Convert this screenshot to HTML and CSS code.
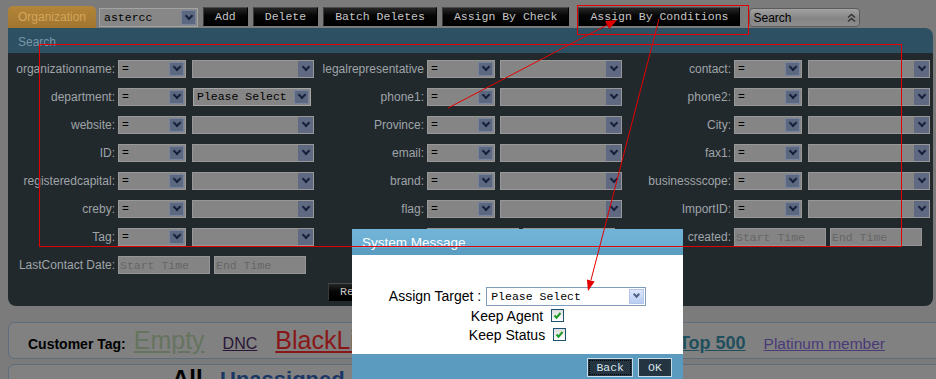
FILE: index.html
```html
<!DOCTYPE html>
<html lang="en">
<head>
<meta charset="UTF-8">
<title>Customers - Assign By Conditions</title>
<link rel="stylesheet" href="styles.css">
</head>
<body>

<div class="topbar">
    <span class="tab">Organization</span>
    <span class="sel top-sel"><span class="val">astercc</span><span class="arr"></span></span>
    <button class="btn">Add</button>
    <button class="btn">Delete</button>
    <button class="btn">Batch Deletes</button>
    <button class="btn">Assign By Check</button>
    <button class="btn sep">Assign By Conditions</button>
    <span class="search-sel sep">Search
        <svg width="9" height="9" viewBox="0 0 9 9"><path d="M1 4.5l3.5-3 3.5 3M1 8.5l3.5-3 3.5 3" fill="none" stroke="#333" stroke-width="1.4"/></svg>
    </span>
</div>

<div class="panel">
    <div class="panel-head">Search</div>
    <div class="panel-body">
        <div class="grid">
            <label class="lb">organizationname:</label>
            <span class="sel"><span class="val">=</span><span class="arr"></span></span>
            <span class="sel wide"><span class="val"></span><span class="arr"></span></span>
            <label class="lb">legalrepresentative</label>
            <span class="sel"><span class="val">=</span><span class="arr"></span></span>
            <span class="sel wide"><span class="val"></span><span class="arr"></span></span>
            <label class="lb">contact:</label>
            <span class="sel"><span class="val">=</span><span class="arr"></span></span>
            <span class="sel wide"><span class="val"></span><span class="arr"></span></span>

            <label class="lb">department:</label>
            <span class="sel"><span class="val">=</span><span class="arr"></span></span>
            <span class="sel pick"><span class="val">Please Select</span><span class="arr"></span></span>
            <label class="lb">phone1:</label>
            <span class="sel"><span class="val">=</span><span class="arr"></span></span>
            <span class="sel wide"><span class="val"></span><span class="arr"></span></span>
            <label class="lb">phone2:</label>
            <span class="sel"><span class="val">=</span><span class="arr"></span></span>
            <span class="sel wide"><span class="val"></span><span class="arr"></span></span>

            <label class="lb">website:</label>
            <span class="sel"><span class="val">=</span><span class="arr"></span></span>
            <span class="sel wide"><span class="val"></span><span class="arr"></span></span>
            <label class="lb">Province:</label>
            <span class="sel"><span class="val">=</span><span class="arr"></span></span>
            <span class="sel wide"><span class="val"></span><span class="arr"></span></span>
            <label class="lb">City:</label>
            <span class="sel"><span class="val">=</span><span class="arr"></span></span>
            <span class="sel wide"><span class="val"></span><span class="arr"></span></span>

            <label class="lb">ID:</label>
            <span class="sel"><span class="val">=</span><span class="arr"></span></span>
            <span class="sel wide"><span class="val"></span><span class="arr"></span></span>
            <label class="lb">email:</label>
            <span class="sel"><span class="val">=</span><span class="arr"></span></span>
            <span class="sel wide"><span class="val"></span><span class="arr"></span></span>
            <label class="lb">fax1:</label>
            <span class="sel"><span class="val">=</span><span class="arr"></span></span>
            <span class="sel wide"><span class="val"></span><span class="arr"></span></span>

            <label class="lb">registeredcapital:</label>
            <span class="sel"><span class="val">=</span><span class="arr"></span></span>
            <span class="sel wide"><span class="val"></span><span class="arr"></span></span>
            <label class="lb">brand:</label>
            <span class="sel"><span class="val">=</span><span class="arr"></span></span>
            <span class="sel wide"><span class="val"></span><span class="arr"></span></span>
            <label class="lb">businessscope:</label>
            <span class="sel"><span class="val">=</span><span class="arr"></span></span>
            <span class="sel wide"><span class="val"></span><span class="arr"></span></span>

            <label class="lb">creby:</label>
            <span class="sel"><span class="val">=</span><span class="arr"></span></span>
            <span class="sel wide"><span class="val"></span><span class="arr"></span></span>
            <label class="lb">flag:</label>
            <span class="sel"><span class="val">=</span><span class="arr"></span></span>
            <span class="sel wide"><span class="val"></span><span class="arr"></span></span>
            <label class="lb">ImportID:</label>
            <span class="sel"><span class="val">=</span><span class="arr"></span></span>
            <span class="sel wide"><span class="val"></span><span class="arr"></span></span>

            <label class="lb">Tag:</label>
            <span class="sel"><span class="val">=</span><span class="arr"></span></span>
            <span class="sel wide"><span class="val"></span><span class="arr"></span></span>
            <label class="lb">modified:</label>
            <span class="dates"><input class="date" placeholder="Start Time"><input class="date" placeholder="End Time"></span>
            <label class="lb">created:</label>
            <span class="dates"><input class="date" placeholder="Start Time"><input class="date" placeholder="End Time"></span>

            <label class="lb">LastContact Date:</label>
            <span class="dates"><input class="date" placeholder="Start Time"><input class="date" placeholder="End Time"></span>
        </div>
        <div class="actions">
            <button class="btn">Reset</button>
            <button class="btn">Search</button>
        </div>
    </div>
</div>

<div class="tagbar">
    <b>Customer Tag:</b>
    <a href="#" class="t-empty">Empty</a>
    <a href="#" class="t-dnc">DNC</a>
    <a href="#" class="t-black">BlackList</a>
    <a href="#" class="t-vip">VIP</a>
    <a href="#" class="t-gold">Gold member</a>
    <a href="#" class="t-silver">Silver member</a>
    <a href="#" class="t-top">Top 500</a>
    <a href="#" class="t-plat">Platinum member</a>
</div>

<div class="listbar">
    <b>All</b>
    <a href="#">Unassigned</a>
</div>

<div class="dialog">
    <div class="dlg-title">System Message</div>
    <div class="dlg-body">
        <div class="dlg-line">
            <span>Assign Target :</span>
            <span class="dsel"><span class="val">Please Select</span><span class="darr"></span></span>
        </div>
        <div class="dlg-line">
            <span>Keep Agent</span>
            <span class="cb"><svg width="11" height="11" viewBox="0 0 11 11"><path d="M2.5 5.5l2 2.2 4-4.7" fill="none" stroke="#1f9a2a" stroke-width="2"/></svg></span>
        </div>
        <div class="dlg-line">
            <span>Keep Status</span>
            <span class="cb"><svg width="11" height="11" viewBox="0 0 11 11"><path d="M2.5 5.5l2 2.2 4-4.7" fill="none" stroke="#1f9a2a" stroke-width="2"/></svg></span>
        </div>
    </div>
    <div class="dlg-foot">
        <button class="dbtn focus">Back</button>
        <button class="dbtn">OK</button>
    </div>
</div>

<!-- red review marks drawn over the screen -->
<svg class="marks" width="936" height="379" viewBox="0 0 936 379">
    <g fill="none" stroke="#e40000" stroke-width="1">
        <rect x="577.5" y="5.5" width="171" height="29"/>
        <rect x="39.5" y="44.5" width="862" height="202"/>
        <line x1="448" y1="108" x2="607" y2="25"/>
        <line x1="659" y1="19" x2="591" y2="280"/>
    </g>
    <g fill="#e40000">
        <polygon points="617,20 609.3,29.1 605.1,21.1"/>
        <polygon points="588,291 594.7,281.4 586.9,279.4"/>
    </g>
</svg>

</body>
</html>
```

FILE: styles.css
```css
html, body { margin: 0; height: 379px; overflow: hidden; }
body { position: relative; background: #7b7b7b; font-family: "Liberation Sans", Arial, sans-serif; font-size: 12px; }

/* top toolbar */
.topbar { display: flex; align-items: flex-start; height: 22px; padding: 6px 0 0 8px; }
.tab { height: 22px; line-height: 22px; padding: 0 10px; color: #d4a65c; background: linear-gradient(#b3853a, #a0752f); border-radius: 5px 5px 0 0; }
.btn { height: 19px; margin: 1px 0 0 5px; padding: 0 11px; border: 1px solid #000; border-top-color: #4a4a4a; border-left-color: #3a3a3a; background: linear-gradient(#262626, #050505 45%, #000); color: #c6c6c6; font: 11.5px "Liberation Mono", monospace; line-height: 16px; }
.btn.sep, .search-sel.sep { margin-left: 9px; }
.search-sel { display: flex; align-items: center; box-sizing: border-box; width: 111px; height: 19px; margin-top: 2px; padding: 0 3px 0 3px; border: 1px solid #5c5c5c; border-radius: 4px; background: linear-gradient(#a2a2a2, #858585 55%, #8e8e8e); color: #000; }
.search-sel svg { margin-left: auto; }

/* fake selects */
.sel { display: flex; box-sizing: border-box; width: 68px; height: 18px; border: 1px solid #989898; background: #858585; color: #000; font: 11.5px "Liberation Mono", monospace; }
.sel .val { flex: 1; padding-left: 3px; line-height: 16px; white-space: nowrap; overflow: hidden; }
.sel .arr { display: flex; align-items: center; justify-content: center; width: 13px; margin: 1px; border: 1px solid #76839b; background: #5c6780; }
.sel .arr::after { content: ""; width: 4px; height: 4px; margin-top: -4px; border-right: 2px solid #18203c; border-bottom: 2px solid #18203c; transform: rotate(45deg); }
.sel.wide { width: 122px; }
.sel.wide .arr { width: 15px; margin: 0; border: 0; background: #5f6981; }
.sel.pick { width: 118px; margin-left: 1px; border-color: #a6a6a6; }
.top-sel { width: 99px; height: 19px; margin: 2px 0 0 3px; border-color: #a3a3a3; background: #878787; }
.top-sel .val { padding-left: 4px; line-height: 17px; }

/* search panel */
.panel { width: 925px; margin-left: 8px; }
.panel-head { height: 22px; padding: 3px 0 0 10px; line-height: 22px; background: #2d5063; color: #7897a8; border-radius: 0 8px 0 0; }
.panel-body { padding: 2px 0 5px; background: #22292d; border-radius: 0 0 8px 8px; }
.grid { display: grid; grid-template-columns: 110px 74px 130px 105px 73px 122px 112px 74px 122px; grid-auto-rows: 28px; align-items: center; }
.lb { padding-right: 3px; text-align: right; white-space: nowrap; color: #9fa4a8; }
.dates { grid-column: span 2; display: flex; gap: 4px; }
.date { box-sizing: border-box; width: 92px; height: 18px; padding: 0 1px; border: 1px solid #959595; background: #848484; font: 11.5px "Liberation Mono", monospace; }
.date::placeholder { color: #666; }
.actions { display: flex; gap: 6px; padding: 4px 0 0 320px; }
.actions .btn { height: 18px; margin: 0; }

/* tag rows */
.tagbar, .listbar { box-sizing: border-box; margin-left: 8px; margin-right: -10px; border: 1px solid #5d6d7c; border-radius: 6px; background: #818181; }
.tagbar { display: flex; align-items: baseline; height: 37px; margin-top: 16px; padding: 3px 0 0 19px; }
.tagbar b { font-size: 14px; color: #000; }
.tagbar a { margin-left: 18px; }
.t-empty { font-size: 25px; color: #66745f; margin-left: 8px !important; }
.t-dnc { font-size: 16px; color: #2a1637; }
.t-black { font-size: 25px; color: #8a1717; }
.t-vip { font-size: 20px; font-weight: bold; color: #1d4f60; }
.t-gold { font-size: 18px; color: #4a3a70; }
.t-silver { font-size: 14px; color: #4a3a70; }
.t-top { font-size: 18px; font-weight: bold; color: #1f4f5c; }
.t-plat { font-size: 15.5px; color: #4b3a78; }
.listbar { height: 40px; margin-top: 5px; padding-left: 163px; }
.listbar b { font-size: 24px; color: #000; }
.listbar a { margin-left: 14px; font-size: 22px; font-weight: bold; color: #1b3766; text-decoration: none; }

/* modal dialog */
.dialog { position: absolute; left: 352px; top: 229px; width: 331px; z-index: 5; }
.dlg-title { box-sizing: border-box; height: 26px; padding: 5px 0 0 10px; line-height: 17px; font-size: 13.5px; color: #fff; background: linear-gradient(#72b4d7, #6aaed2 72%, #5c9dc2 74%, #5c9dc2); }
.dlg-body { box-sizing: border-box; height: 99px; padding-top: 31px; background: #fff; font-size: 14px; color: #000; }
.dlg-line { display: flex; justify-content: center; align-items: center; height: 19px; }
.dlg-line:first-child { height: 20px; }
.dsel { display: flex; box-sizing: border-box; width: 160px; height: 19px; margin-left: 5px; border: 1px solid #7f9db9; font: 11.5px "Liberation Mono", monospace; }
.dsel .val { flex: 1; padding-left: 4px; line-height: 17px; }
.darr { display: flex; align-items: center; justify-content: center; width: 15px; margin: 1px; box-sizing: border-box; border: 1px solid #b3c6ec; background: linear-gradient(#dde7fb, #b9ccf3); }
.darr::after { content: ""; width: 3px; height: 3px; margin-top: -3px; border-right: 2px solid #4d6185; border-bottom: 2px solid #4d6185; transform: rotate(45deg); }
.cb { display: flex; align-items: center; justify-content: center; box-sizing: border-box; width: 13px; height: 13px; margin-left: 8px; border: 1px solid #1c5170; background: linear-gradient(#dcdcdc, #fff); }
.dlg-foot { display: flex; justify-content: flex-end; gap: 5px; height: 30px; padding: 4px 11px 0 0; box-sizing: border-box; background: #5b9bc0; }
.dbtn { height: 19px; min-width: 34px; padding: 0 8px; border: 1px solid #c5dced; background: #243441; color: #d8e3ea; font: 11.5px "Liberation Mono", monospace; }
.dbtn.focus { outline: 1px dotted #000; outline-offset: -3px; }

/* review marks */
.marks { position: absolute; left: 0; top: 0; z-index: 10; pointer-events: none; }
```
